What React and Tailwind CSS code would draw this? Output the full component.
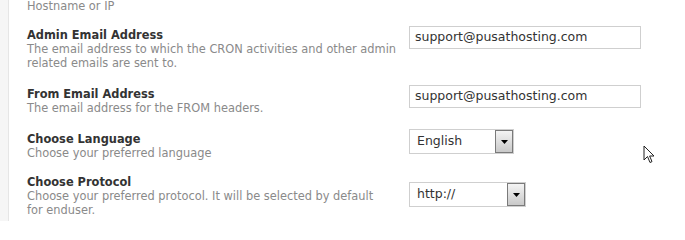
import React from "react";

const font = { fontFamily: '"DejaVu Sans", Verdana, sans-serif' };

function Row({ title, desc, children, className = "" }) {
  return (
    <div className={`flex ${className}`}>
      <div className="w-[382px] shrink-0">
        <div className="text-[11.4px] leading-[14px] font-bold text-[#333]">{title}</div>
        <div className="text-[11.4px] leading-[14px] text-[#8a8a8a] whitespace-nowrap">{desc}</div>
      </div>
      <div>{children}</div>
    </div>
  );
}

function TextInput({ value }) {
  return (
    <div className="w-[232px] h-[23px] border border-[#cfcfcf] bg-white pl-[5px] flex items-center text-[12.5px] text-[#333]">
      {value}
    </div>
  );
}

function Select({ value, width }) {
  return (
    <div
      className="h-[25px] border border-[#cfcfcf] bg-white flex items-stretch"
      style={{ width }}
    >
      <div className="flex-1 flex items-center pl-[7px] text-[12.5px] text-[#333]">{value}</div>
      <div className="w-[18px] border border-[#7a7a7a] bg-gradient-to-b from-[#f4f4f4] to-[#c9c9c9] flex items-center justify-center">
        <svg width="7" height="4" viewBox="0 0 7 4">
          <path d="M0 0 H7 L3.5 4 Z" fill="#000" />
        </svg>
      </div>
    </div>
  );
}

export default function App() {
  return (
    <div className="relative w-[685px] h-[221px] overflow-hidden bg-white flex" style={font}>
      <div className="w-[9px] shrink-0 bg-[#f6f6f6] border-r border-[#e6e6e6]" />
      <div className="flex-1 pl-[18px] flex flex-col">
        <div className="text-[11.4px] leading-[14px] text-[#8a8a8a] mt-[-1px]">Hostname or IP</div>
        <Row
          className="mt-[15px]"
          title="Admin Email Address"
          desc={
            <>
              The email address to which the CRON activities and other admin
              <br />
              related emails are sent to.
            </>
          }
        >
          <div className="mt-[-2px]">
            <TextInput value="support@pusathosting.com" />
          </div>
        </Row>
        <Row className="mt-[17px]" title="From Email Address" desc="The email address for the FROM headers.">
          <div className="mt-[-2px]">
            <TextInput value="support@pusathosting.com" />
          </div>
        </Row>
        <Row className="mt-[17px]" title="Choose Language" desc="Choose your preferred language">
          <div className="mt-[-3px]">
            <Select value="English" width="105px" />
          </div>
        </Row>
        <Row
          className="mt-[15px]"
          title="Choose Protocol"
          desc={
            <>
              Choose your preferred protocol. It will be selected by default
              <br />
              for enduser.
            </>
          }
        >
          <div className="mt-[7px]">
            <Select value="http://" width="117px" />
          </div>
        </Row>
      </div>
      <svg className="absolute left-[643px] top-[145px]" width="14" height="20" viewBox="0 0 14 20">
        <path d="M1 1 V15 L4.5 11.5 L7 17.5 L9 16.6 L6.6 11 H11 Z" fill="#fff" stroke="#222" strokeWidth="1" strokeLinejoin="round" />
      </svg>
    </div>
  );
}
